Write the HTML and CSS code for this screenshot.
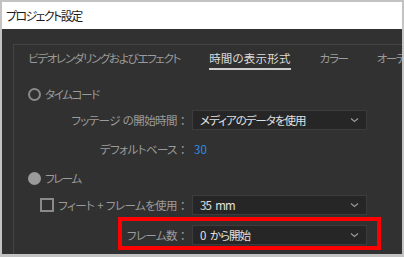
FILE: index.html
```html
<!DOCTYPE html>
<html lang="ja">
<head>
    <meta charset="UTF-8">
    <title>プロジェクト設定</title>
    <link rel="stylesheet" href="styles.css">
</head>
<body>
    <div class="window">
        <div class="titlebar">プロジェクト設定</div>
        <div class="content">
            <div class="panel">
                <div class="tabs">
                    <span class="tab">ビデオレンダリングおよびエフェクト</span>
                    <span class="tab active">時間の表示形式</span>
                    <span class="tab">カラー</span>
                    <span class="tab">オーディオ</span>
                </div>

                <div class="row option timecode">
                    <span class="radio"></span>
                    <span>タイムコード</span>
                </div>
                <div class="row field footage">
                    <span class="label">フッテージ の開始時間 ：</span>
                    <div class="select">
                        <span>メディアのデータを使用</span>
                        <svg class="chevron" width="9" height="6" viewBox="0 0 9 6"><path d="M1 1.5 L4.5 4.5 L8 1.5" fill="none" stroke="#9a9a9a" stroke-width="1.2"/></svg>
                    </div>
                </div>
                <div class="row field base">
                    <span class="label">デフォルトベース ：</span>
                    <span class="value">30</span>
                </div>
                <div class="row option frame">
                    <span class="radio checked"></span>
                    <span>フレーム</span>
                </div>
                <div class="row field feet">
                    <span class="label"><span class="checkbox"></span>フィート + フレームを使用 ：</span>
                    <div class="select">
                        <span>35 mm</span>
                        <svg class="chevron" width="9" height="6" viewBox="0 0 9 6"><path d="M1 1.5 L4.5 4.5 L8 1.5" fill="none" stroke="#9a9a9a" stroke-width="1.2"/></svg>
                    </div>
                </div>
                <div class="row field frames">
                    <span class="label">フレーム数 ：</span>
                    <div class="select">
                        <span>0 から開始</span>
                        <svg class="chevron" width="9" height="6" viewBox="0 0 9 6"><path d="M1 1.5 L4.5 4.5 L8 1.5" fill="none" stroke="#9a9a9a" stroke-width="1.2"/></svg>
                    </div>
                    <div class="highlight"></div>
                </div>
            </div>
        </div>
    </div>
</body>
</html>
```

FILE: styles.css
```css
html, body {
    margin: 0;
    padding: 0;
}
body {
    width: 404px;
    height: 257px;
    background: #c3c3c3;
    font-family: "Noto Sans CJK JP", "Noto Sans", sans-serif;
    font-feature-settings: "palt";
    overflow: hidden;
}
.window {
    margin: 2px 2px 0 2px;
    height: 252px;
    display: flex;
    flex-direction: column;
    overflow: hidden;
}
.titlebar {
    height: 27px;
    background: #ffffff;
    color: #1b1b1b;
    font-size: 12px;
    letter-spacing: -1.6px;
    line-height: 27px;
    padding-left: 4px;
}
.content {
    flex: 1;
    background: #313131;
    padding: 15px 0 0 11px;
    overflow: hidden;
}
.panel {
    border-top: 1px solid #434343;
    border-left: 1px solid #434343;
    height: 240px;
    width: 420px;
    color: #9b9b9b;
    font-size: 11.5px;
    letter-spacing: -0.6px;
}
.tabs {
    display: flex;
    padding: 5px 0 0 14px;
    white-space: nowrap;
    letter-spacing: -1.3px;
}
.tab {
    line-height: 16px;
    padding-bottom: 2px;
    margin-right: 29px;
    border-bottom: 2px solid transparent;
}
.tab.active {
    color: #dcdcdc;
    border-bottom-color: #cfcfcf;
    letter-spacing: 0.2px;
}
.row {
    display: flex;
    align-items: center;
    height: 20px;
}
.option {
    padding-left: 14px;
    gap: 4px;
    letter-spacing: -1.4px;
}
.radio {
    width: 9px;
    height: 9px;
    border: 2px solid #8a8a8a;
    border-radius: 50%;
}
.radio.checked {
    background: #9a9a9a;
    border-color: #9a9a9a;
}
.field .label {
    width: 171px;
    flex: none;
    display: flex;
    justify-content: flex-end;
    align-items: center;
    white-space: pre;
    word-spacing: 1px;
}
.select {
    flex: none;
    margin-left: 7px;
    width: 175px;
    height: 20px;
    box-sizing: border-box;
    background: #262626;
    border: 1px solid #3c3c3c;
    display: flex;
    align-items: center;
    justify-content: space-between;
    padding-left: 7px;
    color: #e1e1e1;
    font-size: 11.5px;
    letter-spacing: -1px;
    word-spacing: 3px;
    white-space: pre;
}
.chevron {
    margin-right: 7px;
}
.value {
    margin-left: 9px;
    color: #2f8ee6;
    letter-spacing: 0;
}
.checkbox {
    width: 10px;
    height: 10px;
    border: 2px solid #8a8a8a;
    margin-right: 4px;
}
.timecode { margin-top: 14px; }
.footage { margin-top: 6px; }
.base { margin-top: 9px; }
.frame { margin-top: 9px; }
.feet { margin-top: 7px; }
.frames {
    margin-top: 10px;
    position: relative;
}
.highlight {
    position: absolute;
    left: 104px;
    top: -8px;
    width: 255px;
    height: 25px;
    border: 4px solid #ff0000;
}
```
